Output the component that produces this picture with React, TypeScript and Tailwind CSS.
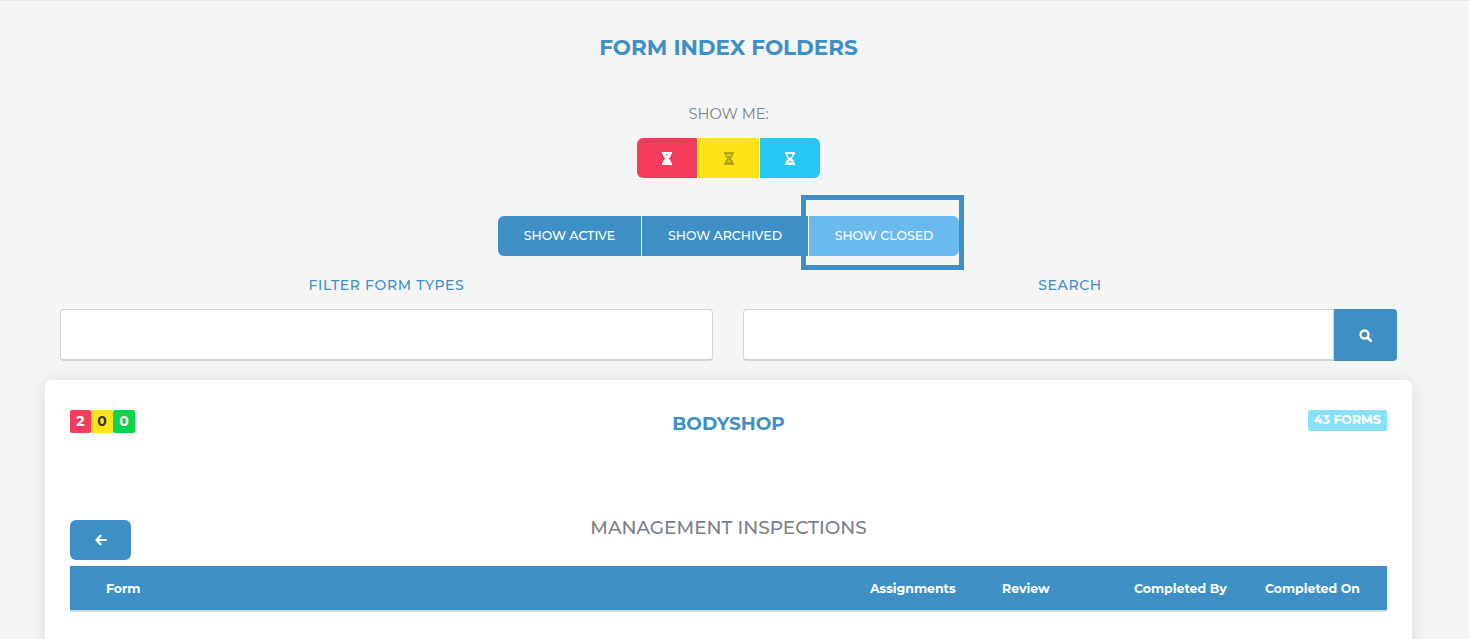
const Glass = ({ color, cut, variant }: { color: string; cut: string; variant: 'start' | 'half' | 'end' }) => (
  <svg width="10" height="13" viewBox="0 0 10 13">
    <path fill={color} d="M0 0h10v2H9.200c0 2-1.200 3.400-2.400 4.500C8 7.600 9.200 9 9.200 11h.8v2H0v-2h.8c0-2 1.200-3.400 2.400-4.500C2 5.400.8 4 .8 2H0z" />
    {variant === 'start' && <path fill={cut} d="M3.800 2.300h2.400c-.1.500-.6 1-1.200 1.400-.6-.4-1.100-.9-1.200-1.400z" />}
    {variant === 'half' && <path fill={cut} d="M2.500 2.400h5c-.1.500-.3.900-.5 1.300H3c-.2-.4-.4-.8-.5-1.300zM5 8.300c-.7.400-1.200 1-1.500 1.700h3C6.200 9.300 5.700 8.700 5 8.300z" />}
    {variant === 'end' && <path fill={cut} d="M2.300 2h5.400c-.1 1.700-1.100 3.100-2.700 4C3.400 5.100 2.400 3.700 2.300 2zM5 8.400c-.8.400-1.400 1.100-1.600 2h3.200C6.400 9.500 5.800 8.800 5 8.400z" />}
  </svg>
);

const columns = [
  { label: 'Assignments', cls: 'w-[132px]' },
  { label: 'Review', cls: 'w-[132px]' },
  { label: 'Completed By', cls: 'w-[131px]' },
  { label: 'Completed On', cls: 'w-[122px]' },
];

export default function App() {
  return (
    <div className="h-[639px] overflow-hidden bg-[#f5f5f5] border-t border-[#e7e7e7] font-['Montserrat','Inter',sans-serif]">
      <div className="w-[1457px]">
        <h1 className="pt-[34px] text-center text-[21.5px] leading-6 font-bold text-[#3d8fc6]">FORM INDEX FOLDERS</h1>

        <p className="mt-[45px] text-center text-[14.7px] leading-5 text-[#7b8189]">SHOW ME:</p>

        <div className="mt-[14px] flex justify-center">
          <button className="w-[60px] h-10 flex items-center justify-center rounded-l-md bg-[#f73b5d]">
            <Glass color="#fff" cut="#f73b5d" variant="start" />
          </button>
          <button className="w-[62px] h-10 flex items-center justify-center border-l border-white bg-[#ffe415]">
            <Glass color="#b5a31a" cut="#ffe415" variant="half" />
          </button>
          <button className="w-[61px] h-10 flex items-center justify-center border-l border-white rounded-r-md bg-[#26c6f6]">
            <Glass color="#fff" cut="#26c6f6" variant="end" />
          </button>
        </div>

        <div className="mt-[38px] flex justify-center text-[12.5px] font-medium text-white">
          <button className="w-[143px] h-10 rounded-l-md bg-[#3d8fc6]">SHOW ACTIVE</button>
          <button className="w-[167px] h-10 border-l border-white bg-[#3d8fc6]">SHOW ARCHIVED</button>
          <button className="relative w-[151px] h-10 border-l border-white rounded-r-md bg-[#6abaf0]">
            SHOW CLOSED
            <span className="absolute -left-[8px] -top-[21px] w-[163px] h-[75px] border-[5px] border-[#3d8fc6]" />
          </button>
        </div>

        <div className="mt-[19px] mx-[60px] flex gap-[30px]">
          <div className="w-[653px]">
            <label className="block text-center text-[14px] leading-5 font-medium tracking-[0.65px] text-[#3d8fc6]">FILTER FORM TYPES</label>
            <input className="mt-[14px] block w-full h-[52px] rounded bg-white border border-[#d4d4d4] border-b-2" />
          </div>
          <div className="flex-1">
            <label className="block text-center text-[14px] leading-5 font-medium tracking-[0.65px] text-[#3d8fc6]">SEARCH</label>
            <div className="mt-[14px] flex">
              <input className="flex-1 min-w-0 h-[52px] rounded-l bg-white border border-[#d4d4d4] border-b-2" />
              <button className="w-[63px] h-[52px] flex items-center justify-center rounded-r bg-[#3d8fc6]">
                <svg width="13" height="13" viewBox="0 0 13 13" fill="none" stroke="#fff">
                  <circle cx="5.500" cy="5.500" r="4" strokeWidth="2.300" />
                  <path d="M8.600 8.600L12 12" strokeWidth="2.600" strokeLinecap="round" />
                </svg>
              </button>
            </div>
          </div>
        </div>

        <section className="mt-[19px] mx-[45px] h-[400px] rounded-md bg-white shadow-[0_2px_20px_rgba(0,0,0,0.1)] px-[25px] pt-[30px]">
          <div className="grid grid-cols-[1fr_auto_1fr] items-start">
            <div className="flex w-[65px] h-[23px] text-[14px] font-bold leading-[23px] text-center">
              <span className="w-[21px] rounded-[2px] bg-[#f73b5d] text-white">2</span>
              <span className="w-[22px] rounded-[2px] bg-[#ffe415] text-[#333]">0</span>
              <span className="w-[22px] rounded-[2px] bg-[#0bd44f] text-white">0</span>
            </div>
            <h2 className="pt-px text-[18.500px] leading-[26px] font-bold text-[#3d8fc6]">BODYSHOP</h2>
            <span className="justify-self-end w-[79px] h-[21px] rounded-[2px] bg-[#88e0fb] text-center text-[12.500px] leading-[20px] font-bold text-white">43 FORMS</span>
          </div>

          <div className="relative mt-[78px] h-[51px] pt-[5px]">
            <button className="w-[61px] h-10 flex items-center justify-center rounded-md bg-[#3d8fc6]">
              <svg width="12" height="12" viewBox="0 0 12 12" fill="none" stroke="#fff" strokeWidth="2.200" strokeLinecap="round" strokeLinejoin="round">
                <path d="M5.500 1.800L1.500 6l4 4.200M2 6h8.800" />
              </svg>
            </button>
            <h3 className="absolute inset-x-0 top-px text-center text-[18.500px] leading-6 font-medium text-[#7b8189]">MANAGEMENT INSPECTIONS</h3>
          </div>

          <div className="h-[46px] pt-[2px] flex items-center bg-[#3d8fc6] border-b-2 border-[#d8dbe0] text-[12.500px] font-bold text-white">
            <span className="pl-[36px] flex-1">Form</span>
            {columns.map((c) => (
              <span key={c.label} className={c.cls}>{c.label}</span>
            ))}
          </div>
        </section>
      </div>
    </div>
  );
}
